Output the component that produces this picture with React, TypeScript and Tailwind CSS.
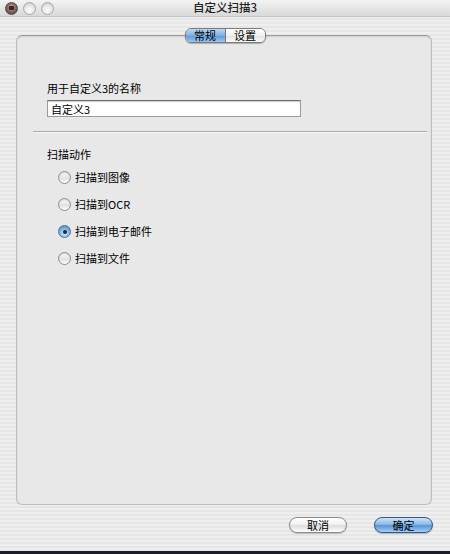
import { useState } from "react"

const FONT = "font-['Lucida_Grande','Noto_Sans_CJK_SC',sans-serif]"

const OPTIONS = ["扫描到图像", "扫描到OCR", "扫描到电子邮件", "扫描到文件"]

function Light({ active }: { active?: boolean }) {
  return active ? (
    <div className="w-[13px] h-[13px] rounded-full border border-[#5a4a48] bg-[radial-gradient(circle_at_50%_40%,#c9b3ae_0%,#8a6a66_45%,#4a3432_100%)] flex items-center justify-center">
      <div className="w-[5px] h-[4px] rounded-[1px] bg-[#3b2624]" />
    </div>
  ) : (
    <div className="w-[13px] h-[13px] rounded-full border border-[#a9a9a9] bg-[radial-gradient(circle_at_50%_65%,#ffffff_0%,#e4e4e4_55%,#bdbdbd_100%)]" />
  )
}

function Radio({ checked }: { checked: boolean }) {
  return checked ? (
    <div className="w-[13px] h-[13px] rounded-full border border-[#4a6f9c] bg-[radial-gradient(circle_at_50%_70%,#cfe6fb_0%,#7fb0e0_55%,#3f74b4_100%)] flex items-center justify-center">
      <div className="w-[4px] h-[4px] rounded-full bg-[#1b2a3c]" />
    </div>
  ) : (
    <div className="w-[13px] h-[13px] rounded-full border border-[#8e8e8e] bg-[linear-gradient(#fafafa,#e2e2e2_60%,#ffffff)] shadow-[inset_0_1px_1px_rgba(0,0,0,0.15)]" />
  )
}

export default function App() {
  const [choice, setChoice] = useState(2)
  const [tab, setTab] = useState(0)

  return (
    <div
      className={`w-[450px] h-[554px] flex flex-col ${FONT} text-[11px] text-black bg-[repeating-linear-gradient(180deg,#efefef_0px,#efefef_2px,#e6e6e6_2px,#e6e6e6_4px)] border-b-[3px] border-[#1b1b2e] overflow-hidden`}
    >
      {/* title bar */}
      <div className="relative h-[17px] flex items-center px-[5px] gap-[5px] bg-[linear-gradient(#f3f3f3,#d9d9d9)] border-b border-[#c4c4c4]">
        <Light active />
        <Light />
        <Light />
        <div className="absolute inset-0 flex items-center justify-center text-[11.5px] font-medium text-[#222]">自定义扫描3</div>
      </div>

      {/* tabs */}
      <div className="relative z-10 mt-[11px] flex justify-center">
        <div className="flex h-[15px] rounded-[6px] border border-[#7a7a7a] overflow-hidden shadow-[0_1px_1px_rgba(0,0,0,0.25)]">
          <button
            onClick={() => setTab(0)}
            className={`w-[39px] flex items-center justify-center leading-none ${tab === 0 ? "bg-[linear-gradient(#bcd8f4,#7fb0e3_50%,#5f98d6_51%,#9cc6ef)]" : "bg-[linear-gradient(#ffffff,#f0f0f0_50%,#e2e2e2_51%,#fafafa)]"}`}
          >
            常规
          </button>
          <div className="w-px bg-[#7a7a7a]" />
          <button
            onClick={() => setTab(1)}
            className={`w-[39px] flex items-center justify-center leading-none ${tab === 1 ? "bg-[linear-gradient(#bcd8f4,#7fb0e3_50%,#5f98d6_51%,#9cc6ef)]" : "bg-[linear-gradient(#ffffff,#f0f0f0_50%,#e2e2e2_51%,#fafafa)]"}`}
          >
            设置
          </button>
        </div>
      </div>

      {/* group box */}
      <div className="ml-[16px] -mt-[8px] w-[416px] h-[470px] rounded-[6px] border border-[#bdbdbd] border-t-[#9a9a9a] bg-[#e8e8e8] shadow-[inset_0_1px_2px_rgba(0,0,0,0.12)] flex flex-col">
        <div className="mt-[45px] ml-[30px] leading-[14px]">用于自定义3的名称</div>
        <input
          defaultValue="自定义3"
          className="mt-[5px] ml-[30px] w-[254px] h-[17px] px-[3px] bg-white border border-[#9b9b9b] border-t-[#6e6e6e] shadow-[inset_0_1px_1px_rgba(0,0,0,0.2)] outline-none text-[11px] leading-none"
        />
        <div className="mt-[14px] ml-[16px] mr-[4px] h-[2px] border-t border-[#a9a9a9] border-b border-b-[#f8f8f8]" />

        <div className="mt-[14px] ml-[30px] leading-[14px]">扫描动作</div>
        <div className="mt-[10px] ml-[41px] flex flex-col gap-[14px]">
          {OPTIONS.map((label, i) => (
            <label key={label} className="flex items-center gap-[4px] h-[13px] leading-none cursor-default" onClick={() => setChoice(i)}>
              <Radio checked={choice === i} />
              <span>{label}</span>
            </label>
          ))}
        </div>
      </div>

      {/* buttons */}
      <div className="mt-[12px] flex justify-end gap-[27px] pr-[17px]">
        <button className="w-[58px] h-[16px] rounded-full border border-[#8a8a8a] bg-[linear-gradient(#ffffff,#f1f1f1_45%,#dcdcdc_55%,#ffffff)] shadow-[0_1px_1px_rgba(0,0,0,0.2)] leading-none">
          取消
        </button>
        <button className="w-[59px] h-[16px] rounded-full border border-[#35588a] bg-[linear-gradient(#cbe2f8,#8dbbe8_45%,#5a94d6_55%,#a8d0f4)] shadow-[0_1px_1px_rgba(0,0,0,0.25)] leading-none">
          确定
        </button>
      </div>
    </div>
  )
}
